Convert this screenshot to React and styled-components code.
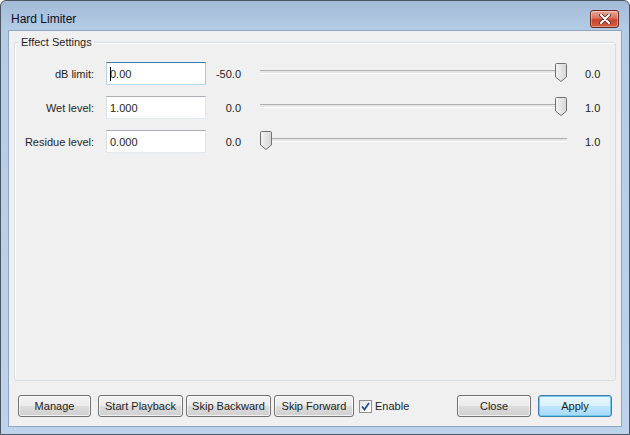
import React from 'react';
import styled, { createGlobalStyle } from 'styled-components';

const GlobalStyle = createGlobalStyle`
  html, body {
    margin: 0;
    padding: 0;
    background: #ffffff;
  }
  body {
    font-family: "Liberation Sans", Arial, sans-serif;
    font-size: 11px;
    color: #1e1e1e;
  }
`;

const Window = styled.div`
  width: 630px;
  height: 435px;
  box-sizing: border-box;
  border: 1px solid #4a5662;
  border-radius: 6px 6px 0 0;
  background: linear-gradient(to bottom, #a3bbd6 0px, #b4cce6 30px, #bcd3eb 100%);
  display: flex;
  flex-direction: column;
  overflow: hidden;
`;

const TitleBar = styled.div`
  height: 29px;
  display: flex;
  align-items: center;
  justify-content: space-between;
  padding: 0 10px 0 10px;
  flex-shrink: 0;
`;

const Title = styled.span`
  font-size: 12px;
  color: #0e0e1a;
  padding-top: 6px;
`;

const CloseBox = styled.div`
  width: 29px;
  height: 18px;
  margin-top: 6px;
  box-sizing: border-box;
  border: 1px solid #6b2a20;
  border-radius: 3px;
  background: linear-gradient(to bottom, #e9a99c 0%, #d9715e 45%, #c7452f 55%, #d35f44 100%);
  display: flex;
  align-items: center;
  justify-content: center;
  box-shadow: inset 0 0 0 1px rgba(255, 255, 255, 0.35);
`;

const Client = styled.div`
  flex: 1;
  margin: 0 7px 7px 7px;
  background: #f0f0f0;
  border: 1px solid #8ea6c0;
  display: flex;
  flex-direction: column;
  padding: 5px 5px 9px 5px;
`;

const Group = styled.fieldset`
  flex: 1;
  margin: 0;
  padding: 14px 0 0 0;
  border: 1px solid #d5dfe5;
  border-radius: 3px;
  box-shadow: inset 1px 1px 0 #ffffff;
  min-width: 0;
`;

const Legend = styled.legend`
  padding: 0 2px;
  margin-left: 4px;
  font-size: 11px;
  color: #1e1e1e;
`;

const Rows = styled.div`
  display: grid;
  grid-template-columns: 91px 100px 35px 326px auto;
  row-gap: 11px;
  align-items: center;
`;

const Label = styled.span`
  text-align: right;
  padding-right: 12px;
`;

const TextBox = styled.div`
  position: relative;
  height: 23px;
  box-sizing: border-box;
  border: 1px solid;
  border-color: ${p => (p.$focused ? '#3d7bad #a4c9e3 #b7d9ed #b5cfe7' : '#abadb3 #e2e3ea #e3e9ef #dbdfe6')};
  background: #ffffff;
  display: flex;
  align-items: center;
  padding-left: 3px;
  font-size: 11px;
`;

const Caret = styled.span`
  position: absolute;
  left: 3px;
  top: 4px;
  width: 1px;
  height: 14px;
  background: #000000;
`;

const MinValue = styled.span`
  text-align: right;
`;

const SliderArea = styled.div`
  position: relative;
  height: 22px;
  margin-left: 19px;
`;

const Track = styled.div`
  position: absolute;
  left: 0;
  right: 0;
  top: 7px;
  height: 2px;
  border-top: 1px solid #b0b0b0;
  border-bottom: 1px solid #ffffff;
  background: #e6e6e6;
`;

const Thumb = styled.svg`
  position: absolute;
  top: 0;
`;

const MaxValue = styled.span`
  padding-left: 18px;
`;

const ButtonBar = styled.div`
  display: flex;
  align-items: center;
  margin-top: 14px;
  padding-left: 4px;
  padding-right: 4px;
`;

const Button = styled.div`
  width: ${p => p.$w}px;
  height: 22px;
  box-sizing: border-box;
  margin-right: ${p => p.$gap || 0}px;
  border: 1px solid ${p => (p.$default ? '#3c7fb1' : '#707070')};
  border-radius: 3px;
  background: ${p =>
    p.$default
      ? 'linear-gradient(to bottom, #eaf6fd 0%, #d9f0fc 50%, #bee6fd 51%, #a7d9f5 100%)'
      : 'linear-gradient(to bottom, #f2f2f2 0%, #ebebeb 50%, #dddddd 51%, #cfcfcf 100%)'};
  box-shadow: inset 0 0 0 1px ${p => (p.$default ? '#6ec8f0' : 'rgba(255,255,255,0.7)')};
  display: flex;
  align-items: center;
  justify-content: center;
  font-size: 11px;
  color: #1e1e1e;
`;

const Check = styled.label`
  display: flex;
  align-items: center;
  gap: 3px;
  margin-left: 5px;
`;

const CheckBox = styled.span`
  width: 13px;
  height: 13px;
  box-sizing: border-box;
  border: 1px solid #8f8f8f;
  background: linear-gradient(135deg, #e4e4e4, #ffffff);
  display: flex;
  align-items: center;
  justify-content: center;
`;

const Spacer = styled.div`
  flex: 1;
`;

const rows = [
  { label: 'dB limit:', value: '0.00', min: '-50.0', max: '0.0', pos: 1, focused: true },
  { label: 'Wet level:', value: '1.000', min: '0.0', max: '1.0', pos: 1 },
  { label: 'Residue level:', value: '0.000', min: '0.0', max: '1.0', pos: 0 },
];

const ThumbIcon = ({ pos }) => (
  <Thumb
    width="12"
    height="19"
    viewBox="0 0 12 19"
    style={{ left: `calc(${pos * 100}% - ${pos * 12}px)` }}
  >
    <defs>
      <linearGradient id="tg" x1="0" y1="0" x2="1" y2="0">
        <stop offset="0" stopColor="#f4f4f4" />
        <stop offset="1" stopColor="#d6d6d6" />
      </linearGradient>
    </defs>
    <path d="M1.5 0.5 H10.5 Q11.5 0.5 11.5 1.5 V14 L6 18.5 L0.5 14 V1.5 Q0.5 0.5 1.5 0.5 Z" fill="url(#tg)" stroke="#707070" />
  </Thumb>
);

export default function App() {
  return (
    <>
      <GlobalStyle />
      <Window>
        <TitleBar>
          <Title>Hard Limiter</Title>
          <CloseBox>
            <svg width="12" height="10" viewBox="0 0 12 10">
              <path d="M2 1 L10 9 M10 1 L2 9" stroke="#5a2a22" strokeWidth="3.6" strokeLinecap="round" />
              <path d="M2 1 L10 9 M10 1 L2 9" stroke="#ffffff" strokeWidth="2" strokeLinecap="round" />
            </svg>
          </CloseBox>
        </TitleBar>
        <Client>
          <Group>
            <Legend>Effect Settings</Legend>
            <Rows>
              {rows.map(r => (
                <React.Fragment key={r.label}>
                  <Label>{r.label}</Label>
                  <TextBox $focused={r.focused}>
                    {r.value}
                    {r.focused && <Caret />}
                  </TextBox>
                  <MinValue>{r.min}</MinValue>
                  <SliderArea>
                    <Track />
                    <ThumbIcon pos={r.pos} />
                  </SliderArea>
                  <MaxValue>{r.max}</MaxValue>
                </React.Fragment>
              ))}
            </Rows>
          </Group>
          <ButtonBar>
            <Button $w={73} $gap={7}>Manage</Button>
            <Button $w={85} $gap={3}>Start Playback</Button>
            <Button $w={85} $gap={3}>Skip Backward</Button>
            <Button $w={80}>Skip Forward</Button>
            <Check>
              <CheckBox>
                <svg width="9" height="9" viewBox="0 0 9 9">
                  <path d="M1 4.5 L3.5 7.5 L8 1" fill="none" stroke="#2b4f8f" strokeWidth="1.8" />
                </svg>
              </CheckBox>
              Enable
            </Check>
            <Spacer />
            <Button $w={74} $gap={7}>Close</Button>
            <Button $w={74} $default>Apply</Button>
          </ButtonBar>
        </Client>
      </Window>
    </>
  );
}
